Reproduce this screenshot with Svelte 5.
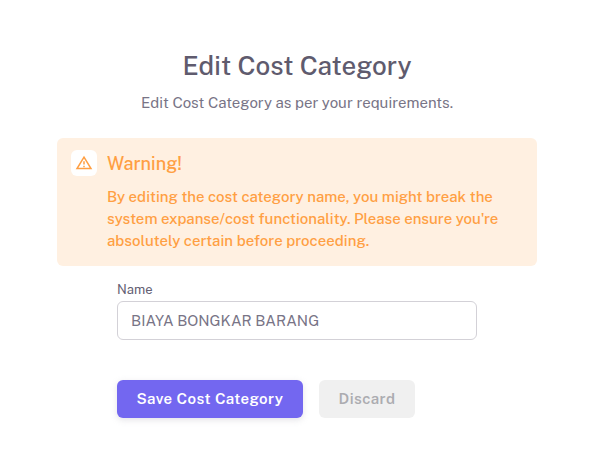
<script>
  let name = $state('BIAYA BONGKAR BARANG');
  const original = 'BIAYA BONGKAR BARANG';

  function discard() {
    name = original;
  }
</script>

<main>
  <header>
    <h3>Edit Cost Category</h3>
    <p>Edit Cost Category as per your requirements.</p>
  </header>

  <div class="alert" role="alert">
    <span class="alert-icon">
      <svg width="18" height="18" viewBox="0 0 24 24" fill="none" stroke="currentColor" stroke-width="2">
        <path d="M12 4.2 L21.3 19.4 H2.7 Z" stroke-linejoin="miter" />
        <path d="M12 9.5v4.5M12 15.5v2" />
      </svg>
    </span>
    <div class="alert-body">
      <h5>Warning!</h5>
      <p>
        By editing the cost category name, you might break the system expanse/cost functionality.
        Please ensure you're absolutely certain before proceeding.
      </p>
    </div>
  </div>

  <form onsubmit={(e) => e.preventDefault()}>
    <label for="name">Name</label>
    <input id="name" type="text" bind:value={name} />
    <div class="actions">
      <button type="submit" class="save">Save Cost Category</button>
      <button type="button" class="discard" onclick={discard}>Discard</button>
    </div>
  </form>
</main>

<style>
  :global(body) {
    background: #fff;
  }
  main {
    box-sizing: border-box;
    width: 594px;
    height: 464px;
    padding: 48px 57px 0;
    overflow: hidden;
    font-family: 'Public Sans', Inter, sans-serif;
    font-size: 15px;
    line-height: 22px;
    color: #787486;
    -webkit-font-smoothing: antialiased;
  }
  header {
    text-align: center;
  }
  h3 {
    margin: 0 0 8px;
    font-size: 26px;
    font-weight: 500;
    line-height: 36px;
    color: #5f5b6e;
  }
  p {
    margin: 0;
  }
  .alert {
    box-sizing: border-box;
    display: flex;
    gap: 10px;
    height: 128px;
    margin-top: 24px;
    padding: 12px 14px;
    border-radius: 6px;
    background: #fff0e1;
    color: #ff9f43;
  }
  .alert-icon {
    display: flex;
    flex: none;
    align-items: center;
    justify-content: center;
    width: 26px;
    height: 26px;
    border-radius: 6px;
    background: #fff;
  }
  h5 {
    margin: 2px 0 10px;
    font-size: 18px;
    font-weight: 500;
    line-height: 24px;
  }
  .alert-body p {
    font-weight: 500;
  }
  form {
    padding: 15px 60px 0;
  }
  label {
    display: block;
    margin-bottom: 2px;
    font-size: 13px;
    line-height: 18px;
    color: #646073;
  }
  input {
    box-sizing: border-box;
    display: block;
    width: 360px;
    height: 39px;
    padding: 0 13px;
    border: 1px solid #d3d1d7;
    border-radius: 6px;
    font: inherit;
    color: #787486;
    outline: none;
  }
  .actions {
    display: flex;
    gap: 16px;
    margin-top: 40px;
  }
  button {
    height: 38px;
    padding: 0;
    border: none;
    border-radius: 6px;
    font: inherit;
    font-weight: 600;
    letter-spacing: 0.43px;
    cursor: pointer;
  }
  .save {
    width: 186px;
    background: #7367f0;
    box-shadow: 0 2px 6px rgba(165, 163, 174, 0.3);
    color: #fff;
  }
  .discard {
    width: 96px;
    background: #f0f0f0;
    color: #acacb0;
  }
</style>
